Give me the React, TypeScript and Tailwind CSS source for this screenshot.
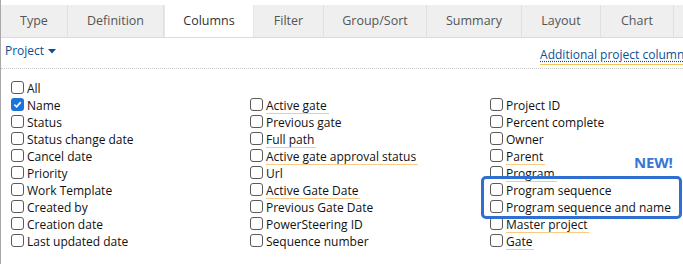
import React from "react";

interface Field {
  label: string;
  checked?: boolean;
  underline?: boolean;
}

const tabs = [
  { name: "Type", w: "w-[67px]" },
  { name: "Definition", w: "w-[96px]" },
  { name: "Columns", w: "w-[90px]", active: true },
  { name: "Filter", w: "w-[70px]" },
  { name: "Group/Sort", w: "w-[103px]" },
  { name: "Summary", w: "w-[95px]" },
  { name: "Layout", w: "w-[79px]" },
  { name: "Chart", w: "w-[73px]" },
];

const col1: Field[] = [
  { label: "All" },
  { label: "Name", checked: true },
  { label: "Status" },
  { label: "Status change date" },
  { label: "Cancel date" },
  { label: "Priority" },
  { label: "Work Template" },
  { label: "Created by" },
  { label: "Creation date" },
  { label: "Last updated date" },
];

const col2: Field[] = [
  { label: "Active gate", underline: true },
  { label: "Previous gate" },
  { label: "Full path", underline: true },
  { label: "Active gate approval status", underline: true },
  { label: "Url" },
  { label: "Active Gate Date", underline: true },
  { label: "Previous Gate Date" },
  { label: "PowerSteering ID" },
  { label: "Sequence number" },
];

const col3: Field[] = [
  { label: "Project ID" },
  { label: "Percent complete" },
  { label: "Owner" },
  { label: "Parent", underline: true },
  { label: "Program", underline: true },
  { label: "Program sequence" },
  { label: "Program sequence and name" },
  { label: "Master project", underline: true },
  { label: "Gate", underline: true },
];

const Checkbox = ({ checked }: { checked?: boolean }) =>
  checked ? (
    <span className="w-[13px] h-[13px] rounded-[3px] bg-[#1e74d6] flex items-center justify-center shrink-0">
      <svg width="9" height="9" viewBox="0 0 10 10">
        <path d="M1.5 5.2 L4 7.6 L8.6 2.4" fill="none" stroke="#fff" strokeWidth="1.8" />
      </svg>
    </span>
  ) : (
    <span className="w-[13px] h-[13px] rounded-[3px] border border-[#5a5a5a] bg-white shrink-0" />
  );

const Row = ({ f }: { f: Field }) => (
  <div className="h-[17px] flex items-center gap-[3px]">
    <Checkbox checked={f.checked} />
    <span
      className={
        f.underline
          ? "leading-[15px] pr-[2px] border-b border-[#f9cb85] mt-[2px]"
          : "leading-[15px] mt-[2px]"
      }
    >
      {f.label}
    </span>
  </div>
);

export default function App() {
  return (
    <div
      className="relative w-[683px] h-[264px] bg-white border-l border-[#a8a8a8] overflow-hidden text-[12px] text-[#111]"
      style={{ fontFamily: '"Open Sans", "Noto Sans", sans-serif' }}
    >
      <div className="pt-[5px] flex border-b border-[#dcdcdc] bg-white">
        {tabs.map((t) => (
          <div
            key={t.name}
            className={
              t.active
                ? `${t.w} h-[32px] flex items-center justify-center bg-white text-[#333] text-[12.5px] border-x border-[#e6e6e6] -mb-px`
                : `${t.w} h-[32px] flex items-center justify-center bg-[#efefef] text-[#555] text-[12.5px] border-r border-[#e0e0e0]`
            }
          >
            {t.name}
          </div>
        ))}
        <div className="flex-1 h-[32px] bg-[#efefef]" />
      </div>

      <div className="h-[31px] flex items-center justify-between pl-[4px] border-b border-dotted border-[#c8c8c8]">
        <div className="flex items-center gap-[4px] text-[#0d4f93] text-[12px] -mt-[4px]">
          <span>Project</span>
          <svg width="8" height="5" viewBox="0 0 8 5">
            <path d="M0 0 H8 L4 4.5 Z" fill="#0d4f93" />
          </svg>
        </div>
        <div className="whitespace-nowrap text-[12px] text-[#0d4f93] -mr-[7px] mt-[3px]">
          <span className="underline decoration-dotted decoration-[#0d4f93] underline-offset-2 border-b border-[#f6c354] pb-[1px]">
            Additional project columns
          </span>
        </div>
      </div>

      <div className="flex pt-[10px]">
        <div className="w-[249px] pl-[10px]">
          {col1.map((f) => (
            <Row key={f.label} f={f} />
          ))}
        </div>
        <div className="w-[240px] pt-[17px]">
          {col2.map((f) => (
            <Row key={f.label} f={f} />
          ))}
        </div>
        <div className="pt-[17px]">
          {col3.map((f) => (
            <Row key={f.label} f={f} />
          ))}
        </div>
      </div>

      <div className="absolute left-[633px] top-[151px] text-[15px] font-bold text-[#3577d4] tracking-[-0.2px]">
        NEW!
      </div>
      <div className="absolute left-[480px] top-[176px] w-[201px] h-[43px] border-[3px] border-[#2f6fd2] rounded-[5px]" />
    </div>
  );
}
